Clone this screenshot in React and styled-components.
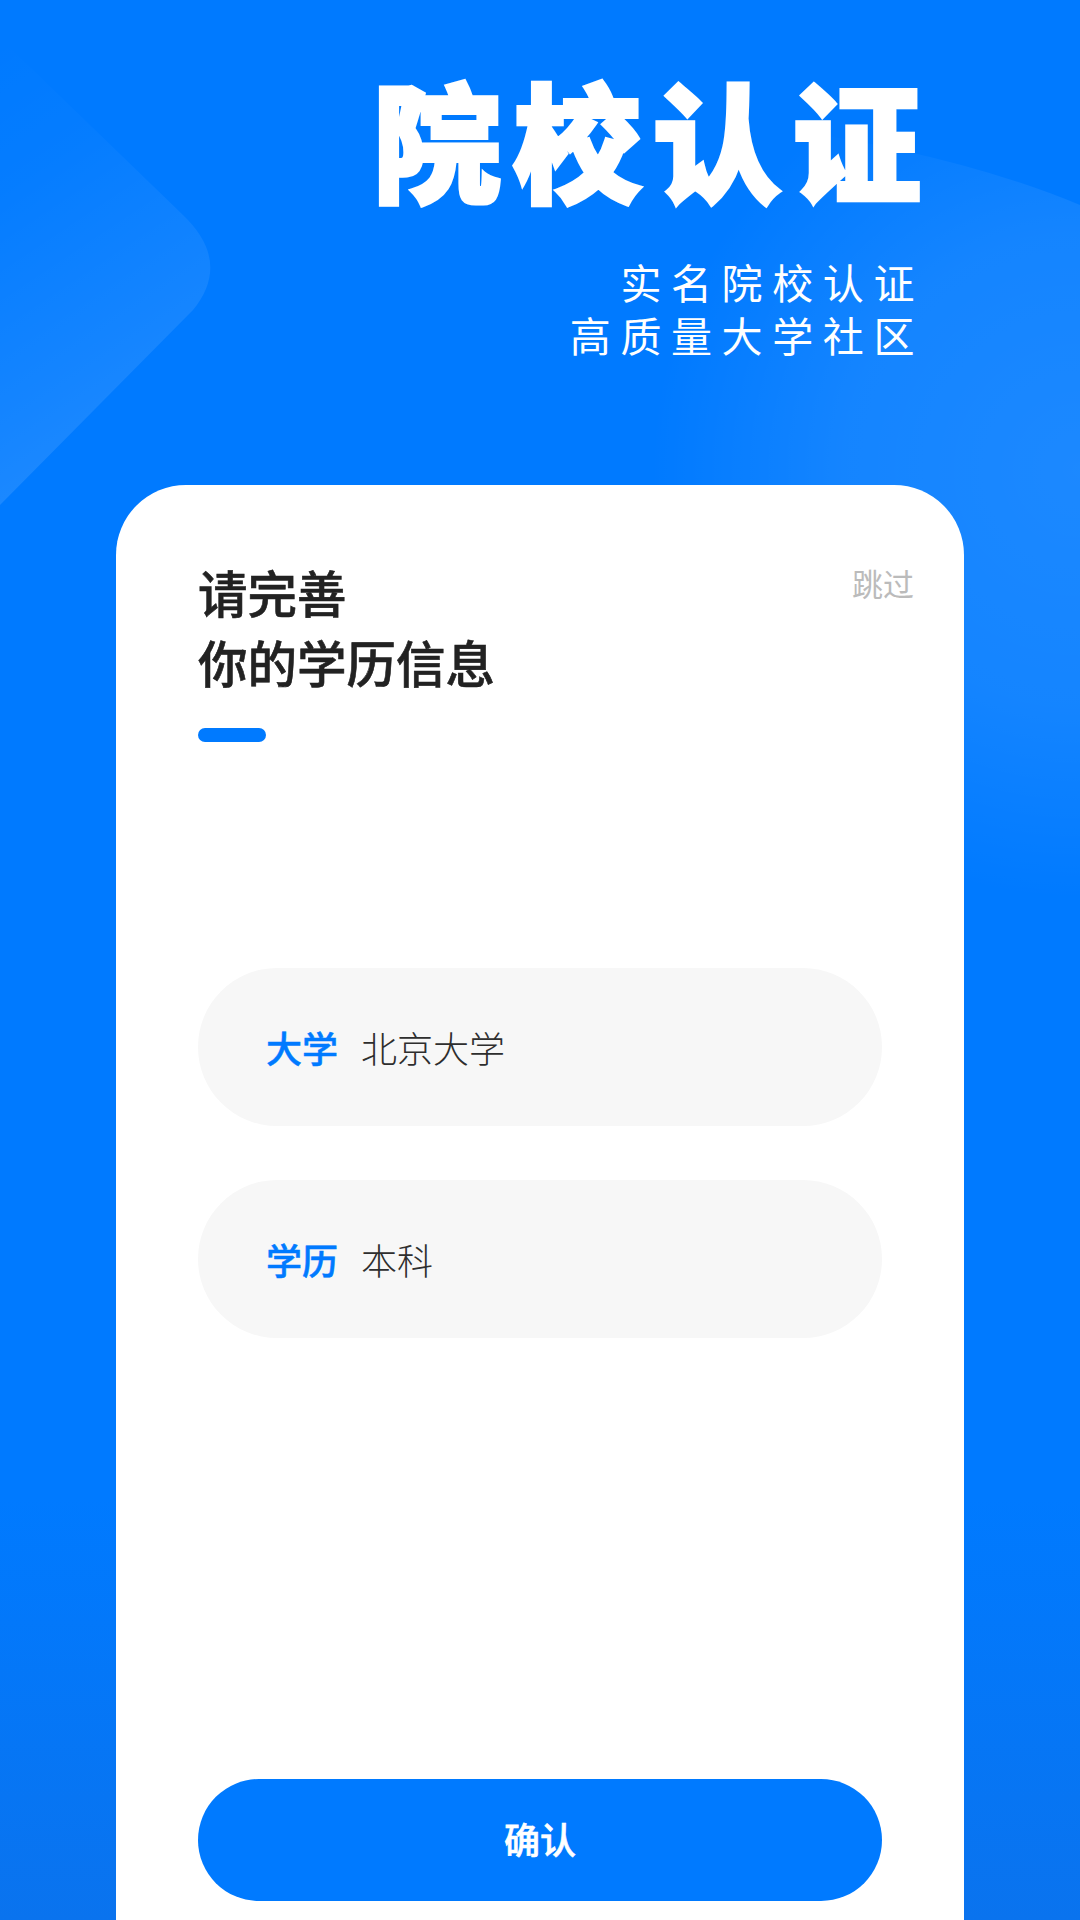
import React from "react";
import styled, { createGlobalStyle } from "styled-components";

const Global = createGlobalStyle`
  html, body { margin: 0; padding: 0; }
  body { font-family: "Noto Sans CJK SC", "Noto Sans", sans-serif; }
`;

const Page = styled.div`
  position: relative;
  width: 1080px;
  height: 1920px;
  overflow: hidden;
  background: linear-gradient(180deg, #007aff 0%, #007aff 78%, #0a73ee 100%);
  display: flex;
  flex-direction: column;
`;

const Decor = styled.svg`
  position: absolute;
  inset: 0;
  width: 1080px;
  height: 1920px;
`;

const Hero = styled.header`
  position: relative;
  height: 485px;
  box-sizing: border-box;
  padding: 56px 147px 0 0;
  display: flex;
  flex-direction: column;
  align-items: flex-end;
`;

const HeroTitle = styled.h1`
  margin: 0;
  font-size: 128px;
  line-height: 164px;
  font-weight: 900;
  letter-spacing: 12px;
  color: #fff;
  -webkit-text-stroke: 4px #fff;
  white-space: nowrap;
`;

const HeroSub = styled.p`
  margin: 35px 9px 0 0;
  font-size: 41px;
  line-height: 53px;
  font-weight: 400;
  letter-spacing: 9.6px;
  color: #fff;
  text-align: right;
`;

const Card = styled.main`
  position: relative;
  margin-left: 116px;
  width: 848px;
  flex: 1;
  box-sizing: border-box;
  background: #fff;
  border-radius: 70px 70px 0 0;
  padding: 72px 82px 19px;
  display: flex;
  flex-direction: column;
`;

const Head = styled.div`
  display: flex;
  justify-content: space-between;
`;

const Title = styled.h2`
  margin: 0;
  font-size: 49.5px;
  line-height: 70px;
  font-weight: 500;
  -webkit-text-stroke: 0.6px #222;
  color: #222;
`;

const Skip = styled.span`
  margin: 4px -32px 0 0;
  font-size: 31px;
  line-height: 44px;
  color: #bbb;
`;

const Accent = styled.div`
  margin-top: 31px;
  width: 68px;
  height: 14px;
  border-radius: 7px;
  background: #007aff;
`;

const Fields = styled.div`
  margin-top: 226px;
  display: flex;
  flex-direction: column;
  gap: 54px;
`;

const Field = styled.div`
  height: 158px;
  box-sizing: border-box;
  border-radius: 79px;
  background: #f7f7f7;
  padding: 0 68px;
  display: flex;
  align-items: center;
  gap: 23px;
  font-size: 36px;
`;

const Label = styled.span`
  color: #007aff;
  font-weight: 500;
  -webkit-text-stroke: 0.5px #007aff;
`;

const Value = styled.span`
  color: #2e2e2e;
  font-weight: 300;
`;

const Confirm = styled.button`
  margin-top: auto;
  height: 122px;
  border: 0;
  padding: 0 0 4px;
  border-radius: 61px;
  background: #007aff;
  color: #fff;
  font-family: inherit;
  font-size: 36px;
  font-weight: 500;
  -webkit-text-stroke: 0.6px #fff;
`;

export default function App() {
  return (
    <Page>
      <Global />
      <Decor viewBox="0 0 1080 1920">
        <defs>
          <linearGradient id="leftFade" x1="0" y1="0" x2="0.3" y2="1">
            <stop offset="0" stopColor="#fff" stopOpacity="0" />
            <stop offset="0.3" stopColor="#fff" stopOpacity="0.02" />
            <stop offset="0.75" stopColor="#fff" stopOpacity="0.08" />
            <stop offset="1" stopColor="#fff" stopOpacity="0.12" />
          </linearGradient>
          <radialGradient id="rightFade" gradientUnits="userSpaceOnUse" cx="1080" cy="470" r="430">
            <stop offset="0" stopColor="#fff" stopOpacity="0.11" />
            <stop offset="0.55" stopColor="#fff" stopOpacity="0.08" />
            <stop offset="1" stopColor="#fff" stopOpacity="0" />
          </radialGradient>
        </defs>
        <path d="M0 38 L183 215 Q232 262 193 310 L0 505 Z" fill="url(#leftFade)" />
        <path d="M600 110 Q900 130 1080 205 L1080 920 L300 920 Z" fill="url(#rightFade)" />
      </Decor>
      <Hero>
        <HeroTitle>院校认证</HeroTitle>
        <HeroSub>
          实名院校认证
          <br />
          高质量大学社区
        </HeroSub>
      </Hero>
      <Card>
        <Head>
          <Title>
            请完善
            <br />
            你的学历信息
          </Title>
          <Skip>跳过</Skip>
        </Head>
        <Accent />
        <Fields>
          <Field>
            <Label>大学</Label>
            <Value>北京大学</Value>
          </Field>
          <Field>
            <Label>学历</Label>
            <Value>本科</Value>
          </Field>
        </Fields>
        <Confirm>确认</Confirm>
      </Card>
    </Page>
  );
}
